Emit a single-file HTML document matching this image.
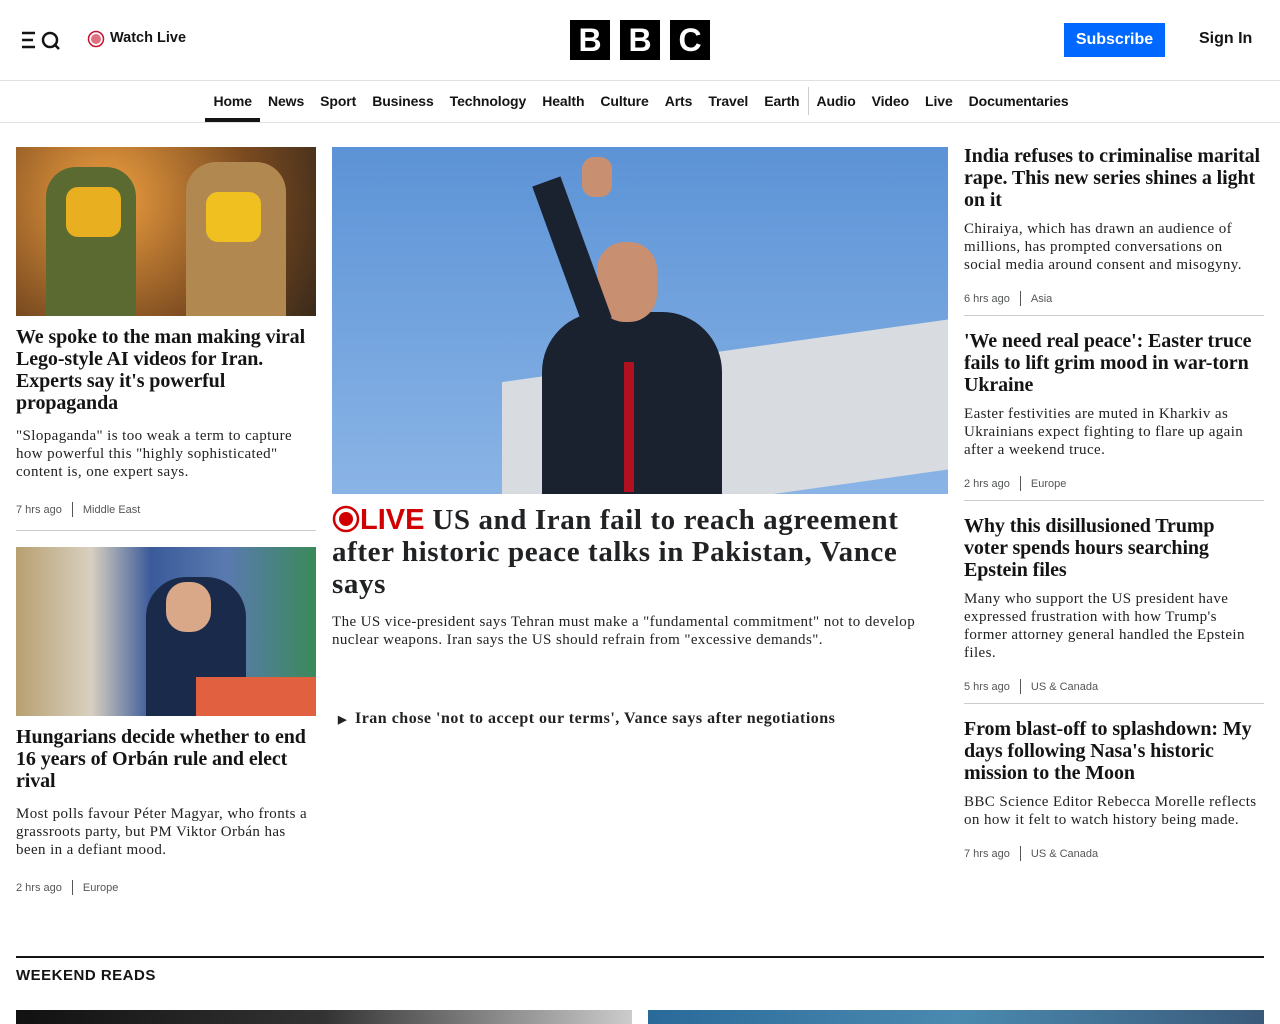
<!DOCTYPE html>
<html><head><meta charset="utf-8"><style>
*{margin:0;padding:0;box-sizing:border-box}
body{width:1280px;height:1024px;overflow:hidden;background:#fff;font-family:"Liberation Sans",sans-serif;color:#141414;position:relative}
.a{position:absolute}
.serif{font-family:"Liberation Serif",serif}
h3{font-family:"Liberation Serif",serif;font-weight:700;font-size:20px;line-height:22px;color:#141414;letter-spacing:-0.1px}
p.s{font-family:"Liberation Serif",serif;font-size:15px;line-height:18px;color:#202224;letter-spacing:0.4px}
.meta{font-size:11px;color:#545658;display:flex;align-items:center}
.meta i{display:inline-block;width:1px;height:15px;background:#545658;margin:0 10px}
.nav{position:absolute;top:81px;left:0;width:1280px;height:41px;display:flex;justify-content:center;font-size:14px;font-weight:700;padding-left:2px}
.nav span{padding:12px 8px 0;height:41px;letter-spacing:-0.1px}
.hr{position:absolute;height:1px;background:#ccc}
</style></head><body>
<div class="a" style="top:80px;left:0;width:1280px;height:1px;background:#e0e0e0"></div>
<div class="a" style="top:122px;left:0;width:1280px;height:1px;background:#e0e0e0"></div>
<svg class="a" style="left:22px;top:31px" width="40" height="20" viewBox="0 0 40 20"><path d="M0 2h13M0 9h11M0 16h13" stroke="#141414" stroke-width="2.5"/><circle cx="28" cy="9" r="7" fill="none" stroke="#141414" stroke-width="2.5"/><path d="M32 13l5 5" stroke="#141414" stroke-width="2.5"/></svg>
<svg class="a" style="left:87px;top:30px" width="18" height="18"><circle cx="9" cy="9" r="7.5" fill="none" stroke="#c8102e" stroke-width="1.5"/><circle cx="9" cy="9" r="5" fill="#e07080"/></svg>
<div class="a" style="left:110px;top:30px;font-size:14.5px;font-weight:700">Watch Live</div>
<div class="a" style="left:570px;top:20px;display:flex;gap:10px">
<div style="width:40px;height:40px;background:#000;color:#fff;font-weight:700;font-size:32px;text-align:center;line-height:40px">B</div>
<div style="width:40px;height:40px;background:#000;color:#fff;font-weight:700;font-size:32px;text-align:center;line-height:40px">B</div>
<div style="width:40px;height:40px;background:#000;color:#fff;font-weight:700;font-size:32px;text-align:center;line-height:40px">C</div></div>
<div class="a" style="left:1064px;top:23px;width:101px;height:34px;background:#0068ff;color:#fff;font-size:16px;font-weight:700;text-align:center;line-height:34px">Subscribe</div>
<div class="a" style="left:1199px;top:30px;font-size:16px;font-weight:700">Sign In</div>
<div class="nav"><span style="border-bottom:4px solid #141414">Home</span><span>News</span><span>Sport</span><span>Business</span><span>Technology</span><span>Health</span><span>Culture</span><span>Arts</span><span>Travel</span><span style="border-right:1px solid #ccc;height:28px;margin-top:6px;padding-top:6px">Earth</span><span>Audio</span><span>Video</span><span>Live</span><span>Documentaries</span></div>

<div class="a" style="left:16px;top:147px;width:300px;height:169px;background:radial-gradient(circle at 30% 30%,#f0a040,#7a4a20 60%,#3a2a1a);"><div class="a" style="left:30px;top:20px;width:90px;height:149px;background:#5a6a30;border-radius:30px 30px 0 0"></div><div class="a" style="left:170px;top:15px;width:100px;height:154px;background:#b08850;border-radius:30px 30px 0 0"></div><div class="a" style="left:50px;top:40px;width:55px;height:50px;background:#e8b020;border-radius:12px"></div><div class="a" style="left:190px;top:45px;width:55px;height:50px;background:#f0c020;border-radius:12px"></div></div>
<h3 class="a" style="left:16px;top:326px;width:300px">We spoke to the man making viral Lego-style AI videos for Iran. Experts say it's powerful propaganda</h3>
<p class="s a" style="left:16px;top:427px;width:300px">"Slopaganda" is too weak a term to capture how powerful this "highly sophisticated" content is, one expert says.</p>
<div class="meta a" style="left:16px;top:502px">7 hrs ago<i></i>Middle East</div>
<div class="hr" style="left:16px;top:530px;width:300px"></div>
<div class="a" style="left:16px;top:547px;width:300px;height:169px;background:linear-gradient(90deg,#b8a070,#d8d0c0 25%,#3a5a9a 45%,#5a7ab0 70%,#3a8a5a)"><div class="a" style="left:130px;top:30px;width:100px;height:139px;background:#1a2a4a;border-radius:40px 40px 0 0"></div><div class="a" style="left:150px;top:35px;width:45px;height:50px;background:#d8a888;border-radius:20px"></div><div class="a" style="left:180px;top:130px;width:120px;height:39px;background:#e06040"></div></div>
<h3 class="a" style="left:16px;top:726px;width:300px">Hungarians decide whether to end 16 years of Orbán rule and elect rival</h3>
<p class="s a" style="left:16px;top:805px;width:300px">Most polls favour Péter Magyar, who fronts a grassroots party, but PM Viktor Orbán has been in a defiant mood.</p>
<div class="meta a" style="left:16px;top:880px">2 hrs ago<i></i>Europe</div>

<div class="a" style="left:332px;top:147px;width:616px;height:347px;background:linear-gradient(180deg,#5c93d6,#8ab4e6);overflow:hidden">
<div class="a" style="left:170px;top:200px;width:500px;height:150px;background:#d8dce0;transform:skewY(-8deg)"></div>
<div class="a" style="left:210px;top:165px;width:180px;height:200px;background:#1a2230;border-radius:60px 60px 0 0"></div>
<div class="a" style="left:265px;top:95px;width:60px;height:80px;background:#c89070;border-radius:28px"></div>
<div class="a" style="left:292px;top:215px;width:10px;height:130px;background:#b01020"></div>
<div class="a" style="left:225px;top:30px;width:30px;height:150px;background:#1a2230;transform:rotate(-20deg)"></div>
<div class="a" style="left:250px;top:10px;width:30px;height:40px;background:#c89070;border-radius:12px"></div>
</div>
<div class="a serif" style="left:332px;top:504px;width:600px;font-size:29px;line-height:32px;font-weight:700;color:#202224;letter-spacing:0.6px"><span style="color:#d10000;font-family:'Liberation Sans',sans-serif;letter-spacing:0"><svg width="28" height="28" style="vertical-align:-4px"><circle cx="14" cy="14" r="12" fill="none" stroke="#d10000" stroke-width="2.5"/><circle cx="14" cy="14" r="7" fill="#d10000"/></svg>LIVE</span> US and Iran fail to reach agreement after historic peace talks in Pakistan, Vance says</div>
<p class="s a" style="left:332px;top:613px;width:600px">The US vice-president says Tehran must make a "fundamental commitment" not to develop nuclear weapons. Iran says the US should refrain from "excessive demands".</p>
<div class="a serif" style="left:338px;top:710px;font-size:16px;font-weight:700;color:#202224;letter-spacing:0.5px"><span style="font-size:11px;margin-right:8px">▶</span>Iran chose 'not to accept our terms', Vance says after negotiations</div>

<h3 class="a" style="left:964px;top:145px;width:300px">India refuses to criminalise marital rape. This new series shines a light on it</h3>
<p class="s a" style="left:964px;top:220px;width:300px">Chiraiya, which has drawn an audience of millions, has prompted conversations on social media around consent and misogyny.</p>
<div class="meta a" style="left:964px;top:291px">6 hrs ago<i></i>Asia</div>
<div class="hr" style="left:964px;top:315px;width:300px"></div>
<h3 class="a" style="left:964px;top:330px;width:300px">'We need real peace': Easter truce fails to lift grim mood in war-torn Ukraine</h3>
<p class="s a" style="left:964px;top:405px;width:300px">Easter festivities are muted in Kharkiv as Ukrainians expect fighting to flare up again after a weekend truce.</p>
<div class="meta a" style="left:964px;top:476px">2 hrs ago<i></i>Europe</div>
<div class="hr" style="left:964px;top:500px;width:300px"></div>
<h3 class="a" style="left:964px;top:515px;width:280px">Why this disillusioned Trump voter spends hours searching Epstein files</h3>
<p class="s a" style="left:964px;top:590px;width:300px">Many who support the US president have expressed frustration with how Trump's former attorney general handled the Epstein files.</p>
<div class="meta a" style="left:964px;top:679px">5 hrs ago<i></i>US &amp; Canada</div>
<div class="hr" style="left:964px;top:703px;width:300px"></div>
<h3 class="a" style="left:964px;top:718px;width:300px">From blast-off to splashdown: My days following Nasa's historic mission to the Moon</h3>
<p class="s a" style="left:964px;top:793px;width:300px">BBC Science Editor Rebecca Morelle reflects on how it felt to watch history being made.</p>
<div class="meta a" style="left:964px;top:846px">7 hrs ago<i></i>US &amp; Canada</div>

<div class="a" style="left:16px;top:956px;width:1248px;height:2px;background:#141414"></div>
<div class="a" style="left:16px;top:967px;font-size:15px;font-weight:700;letter-spacing:0.5px">WEEKEND READS</div>
<div class="a" style="left:16px;top:1010px;width:616px;height:14px;background:linear-gradient(90deg,#111,#333 50%,#ccc)"></div>
<div class="a" style="left:648px;top:1010px;width:616px;height:14px;background:linear-gradient(90deg,#2a6a9a,#4a8ab0,#3a5a7a)"></div>
</body></html>
